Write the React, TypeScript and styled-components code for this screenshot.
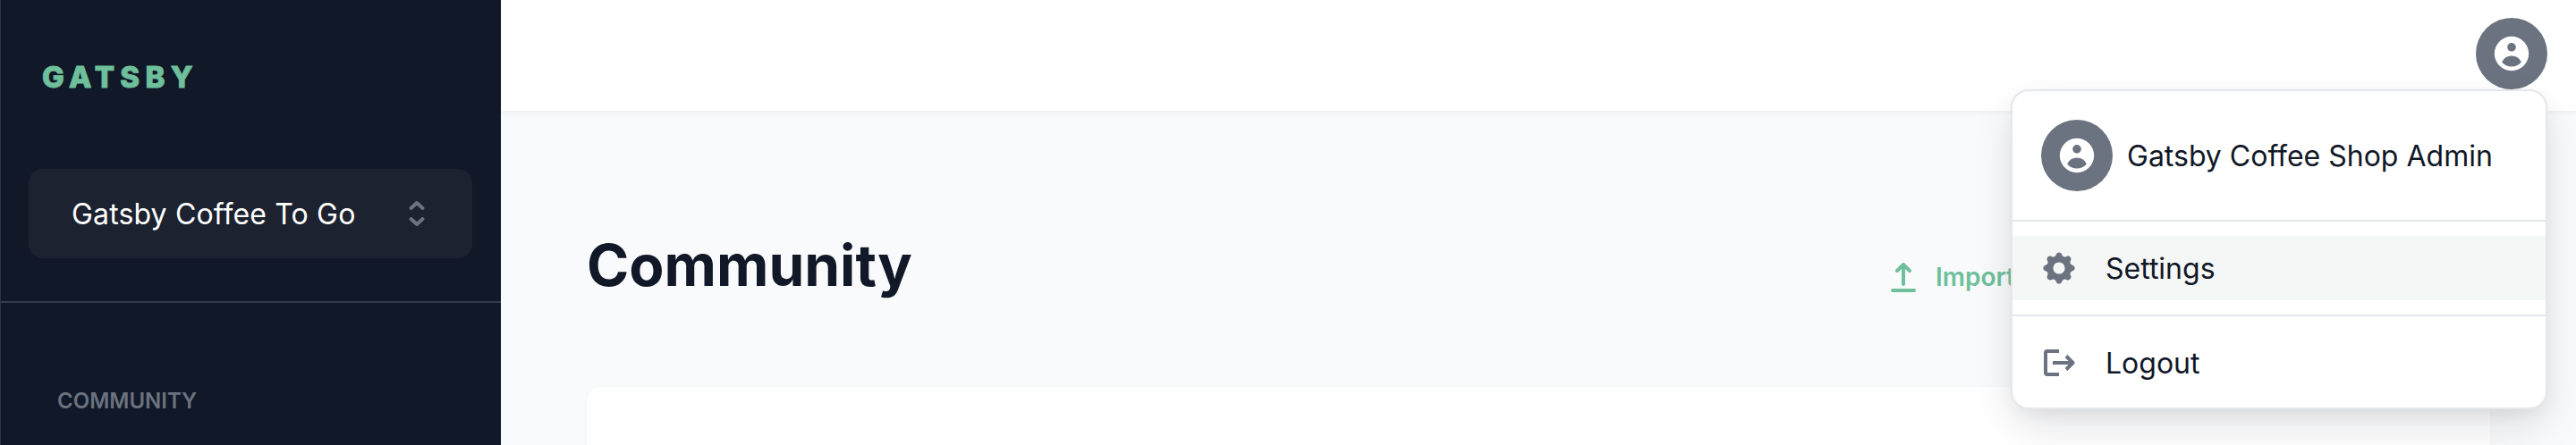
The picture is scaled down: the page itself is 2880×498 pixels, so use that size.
import styled, { createGlobalStyle } from "styled-components";

const GlobalStyle = createGlobalStyle`
  html, body {
    margin: 0;
    padding: 0;
    background: #f9fafb;
    font-family: "Inter", "Liberation Sans", sans-serif;
  }
`;

const Shell = styled.div`
  display: flex;
  height: 498px;
  overflow: hidden;
`;

const Sidebar = styled.aside`
  width: 560px;
  flex-shrink: 0;
  background: #111827;
  box-shadow: inset 1px 0 #2b3240;
  display: flex;
  flex-direction: column;
`;

const Logo = styled.div`
  padding: 66px 0 0 47px;
  height: 123px;
  box-sizing: border-box;
  font-family: "Inter", sans-serif;
  font-size: 33px;
  line-height: 40px;
  font-weight: 800;
  letter-spacing: 6.3px;
  -webkit-text-stroke: 1px #6ebf9b;
  color: #6ebf9b;
`;

const Switcher = styled.div`
  margin: 66px 32px 0;
  height: 100px;
  padding: 0 48px;
  border-radius: 16px;
  background: #1c2230;
  display: flex;
  align-items: center;
  justify-content: space-between;
  font-size: 32px;
  letter-spacing: 0.15px;
  color: #fff;
`;

const SwitcherIcon = styled.svg`
  width: 24px;
  height: 40px;
  margin-right: 2px;
  color: #6b7280;
`;

const SidebarDivider = styled.hr`
  margin: 48px 0 0;
  border: 0;
  height: 2px;
  background: #343b4b;
`;

const SectionLabel = styled.div`
  margin: 94px 0 0 64px;
  font-size: 24px;
  line-height: 32px;
  font-weight: 600;
  color: #6b7280;
`;

const Main = styled.main`
  flex: 1;
  display: flex;
  flex-direction: column;
  position: relative;
`;

const Header = styled.header`
  height: 124px;
  flex-shrink: 0;
  box-sizing: border-box;
  padding: 20px 32px;
  background: #fff;
  box-shadow: 0 2px 6px rgba(17, 24, 39, 0.05);
  display: flex;
  justify-content: flex-end;
  align-items: flex-start;
`;

const Avatar = styled.div`
  width: 80px;
  height: 80px;
  flex-shrink: 0;
  border-radius: 50%;
  background: #6b7280;
  color: #fff;
  display: flex;
  align-items: center;
  justify-content: center;

  svg {
    width: 48px;
    height: 48px;
  }
`;

const Content = styled.div`
  flex: 1;
  padding: 0 96px;
`;

const TitleRow = styled.div`
  height: 309px;
  box-sizing: border-box;
  padding-top: 135px;
  display: flex;
  justify-content: space-between;
`;

const Title = styled.h1`
  margin: 0;
  font-size: 64px;
  line-height: 76px;
  font-weight: 700;
  color: #111827;
`;

const ImportButton = styled.div`
  display: flex;
  gap: 20px;
  align-items: center;
  width: 154px;
  height: 72px;
  margin: 15px 518px 0 0;
  font-size: 28px;
  font-weight: 600;
  color: #6ebf9b;

  svg {
    width: 32px;
    height: 40px;
  }
`;

const Card = styled.div`
  height: 400px;
  background: #fff;
  border-radius: 16px;
  box-shadow: 0 1px 4px rgba(17, 24, 39, 0.03);
`;

const Menu = styled.div`
  position: absolute;
  top: 100px;
  right: 32px;
  width: 600px;
  box-sizing: border-box;
  background: #fff;
  border: 2px solid #e5e7eb;
  border-radius: 20px;
  box-shadow: 0 20px 50px -6px rgba(17, 24, 39, 0.14), 0 8px 20px -4px rgba(17, 24, 39, 0.06);
`;

const MenuProfile = styled.div`
  height: 146px;
  box-sizing: border-box;
  padding: 30px 32px;
  display: flex;
  align-items: center;
  gap: 16px;
  font-size: 32px;
  color: #111827;
  border-bottom: 2px solid #e5e7eb;
`;

const MenuSection = styled.div<{ $last?: boolean }>`
  padding: ${(p) => (p.$last ? "16px 0 14px" : "16px 0")};
  border-bottom: ${(p) => (p.$last ? "none" : "2px solid #e5e7eb")};
`;

const MenuItem = styled.div<{ $active?: boolean }>`
  height: 72px;
  padding: 0 30px;
  display: flex;
  align-items: center;
  gap: 30px;
  font-size: 32px;
  color: #111827;
  background: ${(p) => (p.$active ? "#f5f7f6" : "transparent")};
`;

const MenuIcon = styled.svg`
  width: 44px;
  height: 44px;
  color: #6b7280;
`;

const UserCirclePath = () => (
  <path
    fillRule="evenodd"
    clipRule="evenodd"
    d="M18 10a8 8 0 11-16 0 8 8 0 0116 0zm-6-3a2 2 0 11-4 0 2 2 0 014 0zm-2 4a5 5 0 00-4.546 2.916A5.986 5.986 0 0010 16a5.986 5.986 0 004.546-2.084A5 5 0 0010 11z"
  />
);

const App = () => (
  <>
    <GlobalStyle />
    <Shell>
      <Sidebar>
        <Logo>GATSBY</Logo>
        <Switcher>
          Gatsby Coffee To Go
          <SwitcherIcon viewBox="0 0 24 40" fill="none" stroke="currentColor" strokeWidth="4" strokeLinecap="round" strokeLinejoin="round">
            <path d="M5.500 14L12 8l6.500 6M5.500 26l6.500 6 6.500-6" />
          </SwitcherIcon>
        </Switcher>
        <SidebarDivider />
        <SectionLabel>COMMUNITY</SectionLabel>
      </Sidebar>
      <Main>
        <Header>
          <Avatar>
            <svg viewBox="0 0 20 20" fill="currentColor">
              <UserCirclePath />
            </svg>
          </Avatar>
        </Header>
        <Content>
          <TitleRow>
            <Title>Community</Title>
            <ImportButton>
              <svg viewBox="0 0 32 40" fill="none" stroke="currentColor" strokeWidth="4" strokeLinecap="round" strokeLinejoin="round">
                <path d="M16 28V7M9 13l7-7 7 7M4 35h24" />
              </svg>
              Import
            </ImportButton>
          </TitleRow>
          <Card />
        </Content>
        <Menu>
          <MenuProfile>
            <Avatar>
              <svg viewBox="0 0 20 20" fill="currentColor">
                <UserCirclePath />
              </svg>
            </Avatar>
            Gatsby Coffee Shop Admin
          </MenuProfile>
          <MenuSection>
            <MenuItem $active>
              <MenuIcon viewBox="0 0 20 20" fill="currentColor">
                <path
                  fillRule="evenodd"
                  clipRule="evenodd"
                  d="M11.490 3.170c-.38-1.560-2.600-1.560-2.980 0a1.532 1.532 0 01-2.286.948c-1.372-.836-2.942.734-2.106 2.106.54.886.061 2.042-.947 2.287-1.561.379-1.561 2.600 0 2.978a1.532 1.532 0 01.947 2.287c-.836 1.372.734 2.942 2.106 2.106a1.532 1.532 0 012.287.947c.379 1.561 2.600 1.561 2.978 0a1.533 1.533 0 012.287-.947c1.372.836 2.942-.734 2.106-2.106a1.533 1.533 0 01.947-2.287c1.561-.379 1.561-2.600 0-2.978a1.532 1.532 0 01-.947-2.287c.836-1.372-.734-2.942-2.106-2.106a1.532 1.532 0 01-2.287-.947zM10 13a3 3 0 100-6 3 3 0 000 6z"
                />
              </MenuIcon>
              Settings
            </MenuItem>
          </MenuSection>
          <MenuSection $last>
            <MenuItem>
              <MenuIcon viewBox="0 0 44 44" fill="none" stroke="currentColor" strokeWidth="4" strokeLinejoin="round">
                <path d="M22 9H9a2 2 0 00-2 2v22a2 2 0 002 2h13M15 22h23M30 14.500l7.500 7.500-7.500 7.500" />
              </MenuIcon>
              Logout
            </MenuItem>
          </MenuSection>
        </Menu>
      </Main>
    </Shell>
  </>
);

export default App;
